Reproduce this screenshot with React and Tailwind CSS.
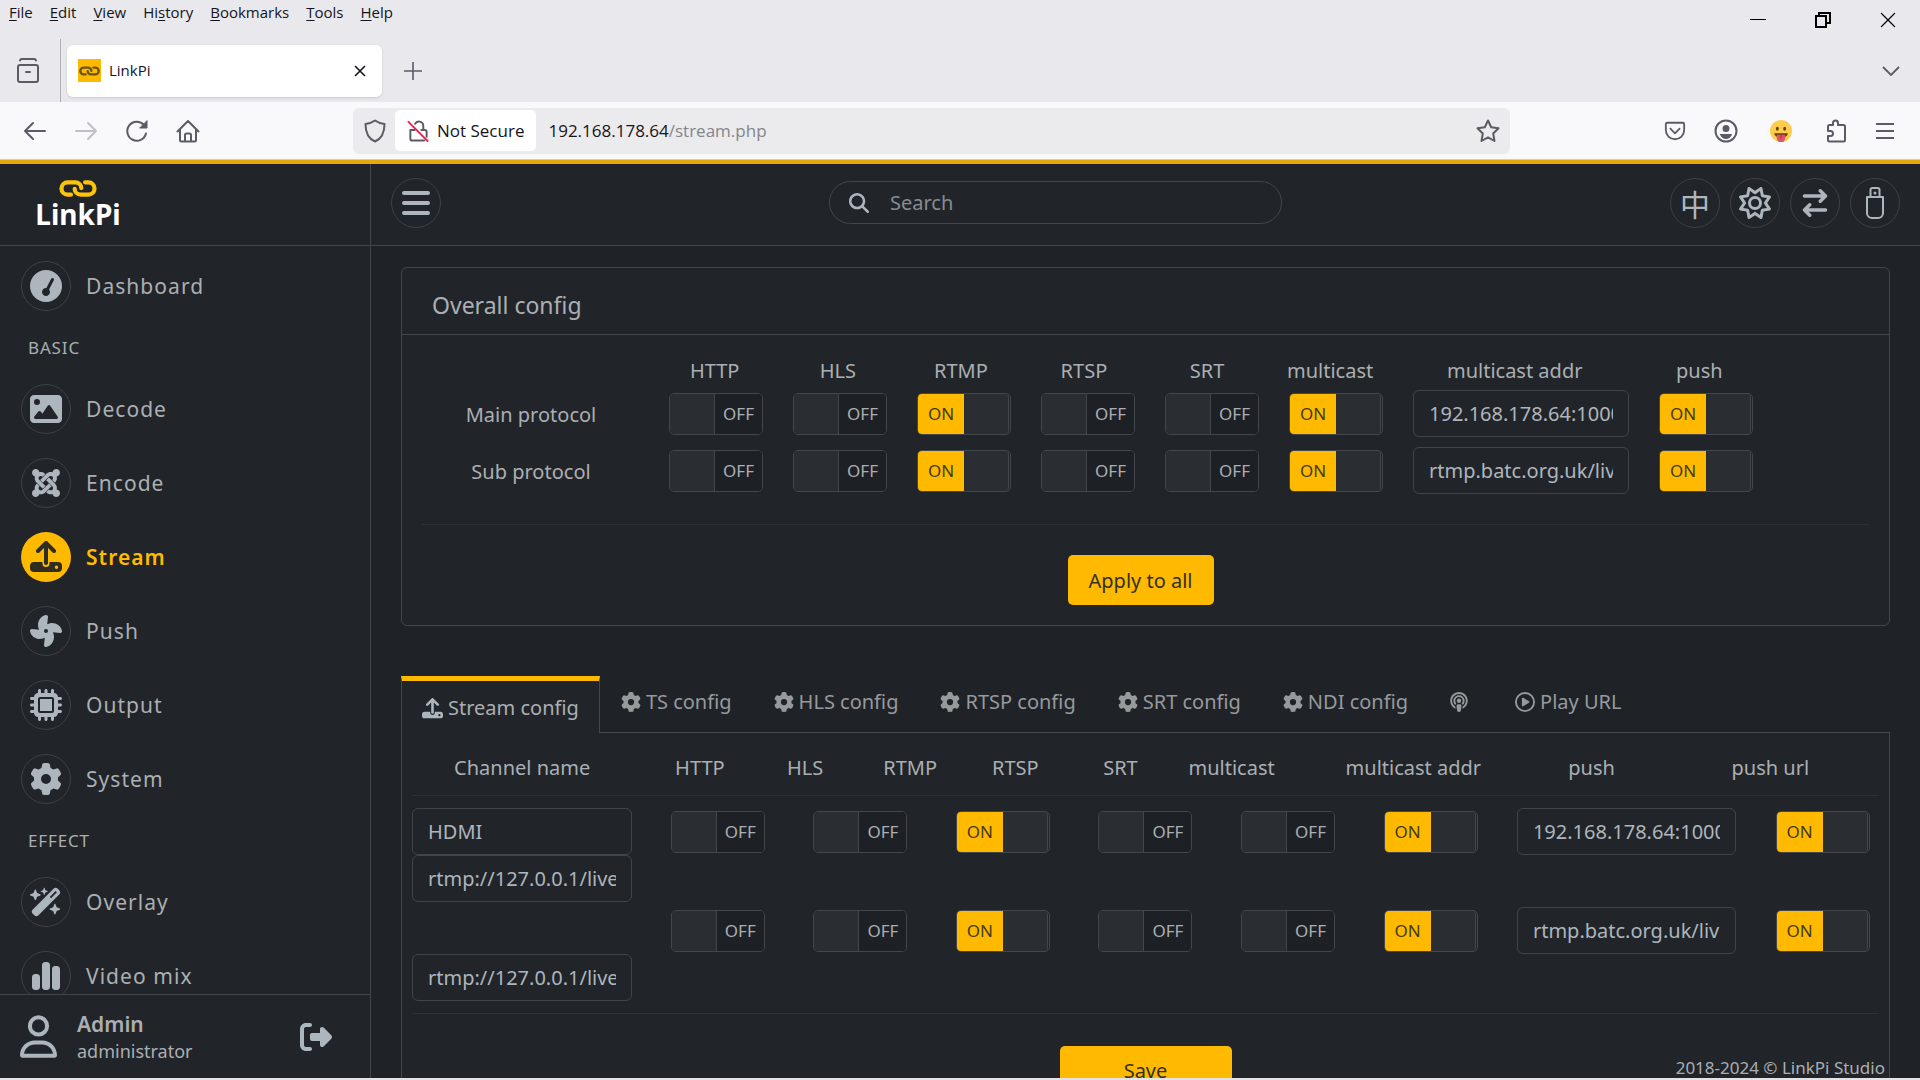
import React, { useState } from 'react';
import {
  FaArrowRightArrowLeft,
  FaBars,
  FaChartSimple,
  FaFan,
  FaGaugeSimpleHigh,
  FaGear,
  FaImage,
  FaJoomla,
  FaMagnifyingGlass,
  FaMicrochip,
  FaPodcast,
  FaRegCirclePlay,
  FaRegSun,
  FaRegUser,
  FaRightFromBracket,
  FaWandMagicSparkles,
} from 'react-icons/fa6';

// Drive with an arrow leaving it, used for streaming
const StreamIcon = ({ className }) => (
  <svg className={className} viewBox="0 0 32 32" fill="none" aria-hidden="true">
    <path
      fill="currentColor"
      fillRule="evenodd"
      d="M4 21h8.500v1.500a3.500 3.500 0 0 0 7 0V21H28a4 4 0 0 1 4 4v2a4 4 0 0 1-4 4H4a4 4 0 0 1-4-4v-2a4 4 0 0 1 4-4zm22.500 3.500a1.700 1.700 0 1 0 0 3.400 1.700 1.700 0 0 0 0-3.400z"
    />
    <path d="M16 22V3M8 10l8-8 8 8" stroke="currentColor" strokeWidth="4" strokeLinecap="round" strokeLinejoin="round" />
  </svg>
);

const UsbIcon = () => (
  <svg className="h-8 w-[18px]" viewBox="0 0 18 32" fill="none" stroke="currentColor" strokeWidth="2" aria-hidden="true">
    <path d="M4.500 10V3a2 2 0 0 1 2-2h5a2 2 0 0 1 2 2v7" />
    <path d="M1 10h16v16a5 5 0 0 1-5 5H6a5 5 0 0 1-5-5z" strokeLinejoin="round" />
    <circle cx="9" cy="6" r="1.500" fill="currentColor" stroke="none" />
  </svg>
);

const ChainIcon = ({ className, color }) => (
  <svg className={className} viewBox="0 0 40 18" fill="none" stroke={color} strokeWidth="4.500" strokeLinecap="round" aria-hidden="true">
    <path d="M12.500 15.500H9A6.500 6.500 0 0 1 9 2.500h8c4 0 6.500 3 6.500 6" />
    <path d="M27.500 2.500H31a6.500 6.500 0 0 1 0 13h-8c-4 0-6.500-3-6.500-6" />
  </svg>
);

const ToolIcon = ({ children, className = 'size-6' }) => (
  <svg
    className={className}
    viewBox="0 0 24 24"
    fill="none"
    stroke="currentColor"
    strokeWidth="2"
    strokeLinecap="round"
    strokeLinejoin="round"
    aria-hidden="true"
  >
    {children}
  </svg>
);

const menus = [
  ['', 'F', 'ile'],
  ['', 'E', 'dit'],
  ['', 'V', 'iew'],
  ['Hi', 's', 'tory'],
  ['', 'B', 'ookmarks'],
  ['', 'T', 'ools'],
  ['', 'H', 'elp'],
];

const navGroups = [
  { items: [{ label: 'Dashboard', icon: FaGaugeSimpleHigh }] },
  {
    title: 'BASIC',
    items: [
      { label: 'Decode', icon: FaImage },
      { label: 'Encode', icon: FaJoomla },
      { label: 'Stream', icon: StreamIcon, active: true },
      { label: 'Push', icon: FaFan },
      { label: 'Output', icon: FaMicrochip },
      { label: 'System', icon: FaGear },
    ],
  },
  {
    title: 'EFFECT',
    items: [
      { label: 'Overlay', icon: FaWandMagicSparkles },
      { label: 'Video mix', icon: FaChartSimple },
    ],
  },
];

const tabs = [
  { label: 'TS config', icon: FaGear },
  { label: 'HLS config', icon: FaGear },
  { label: 'RTSP config', icon: FaGear },
  { label: 'SRT config', icon: FaGear },
  { label: 'NDI config', icon: FaGear },
  { label: '', icon: FaPodcast },
  { label: 'Play URL', icon: FaRegCirclePlay },
];

const protocols = ['HTTP', 'HLS', 'RTMP', 'RTSP', 'SRT', 'multicast'];
const defaults = [false, false, true, false, false, true];

const BrowserChrome = () => (
  <header className="shrink-0 bg-[#e9e9ed] font-['Open_Sans',sans-serif] text-[15px] text-[#15141a]">
    <div className="flex h-[39px] items-start justify-between">
      <nav className="flex gap-[17px] pl-[9px] pt-px leading-[22px]">
        {menus.map(([before, key, after]) => (
          <button key={key + after} type="button">
            {before}
            <span className="underline underline-offset-2">{key}</span>
            {after}
          </button>
        ))}
      </nav>
      <div className="flex h-[39px] items-center gap-[49px] pr-6 text-black">
        <button type="button" aria-label="Minimize">
          <svg className="size-4" viewBox="0 0 16 16" stroke="currentColor">
            <path d="M0 7.500h16" />
          </svg>
        </button>
        <button type="button" aria-label="Restore">
          <svg className="size-4" viewBox="0 0 16 16" fill="none" stroke="currentColor" strokeWidth="2">
            <path d="M1 4h10v11H1zM4 4V1h11v10h-4" />
          </svg>
        </button>
        <button type="button" aria-label="Close window">
          <svg className="size-4" viewBox="0 0 16 16" stroke="currentColor" strokeWidth="1.200">
            <path d="M1 1l14 14M15 1L1 15" />
          </svg>
        </button>
      </div>
    </div>

    <div className="flex h-[63px] items-center text-[#5b5b66]">
      <button type="button" aria-label="Recent browsing" className="flex h-full w-[61px] items-center border-r border-[#b0b0b8] pl-4">
        <svg
          className="h-7 w-6"
          viewBox="0 0 24 28"
          fill="none"
          stroke="currentColor"
          strokeWidth="2"
          strokeLinecap="round"
          strokeLinejoin="round"
          aria-hidden="true"
        >
          <path d="M4 3.500A2 2 0 0 1 6 2h12a2 2 0 0 1 2 1.500M4 8h16a2 2 0 0 1 2 2v13a2 2 0 0 1-2 2H4a2 2 0 0 1-2-2V10a2 2 0 0 1 2-2zM10 15h4" />
        </svg>
      </button>
      <div className="ml-[6px] flex h-[52px] w-[315px] items-center rounded-md bg-white pl-[11px] pr-4 text-[#15141a] shadow">
        <span className="flex size-[23px] items-center justify-center bg-[#ffba00]">
          <ChainIcon className="h-[10px] w-[21px]" color="#6b5310" />
        </span>
        <span className="ml-2 grow">LinkPi</span>
        <button type="button" aria-label="Close tab">
          <svg className="size-3" viewBox="0 0 12 12" stroke="currentColor" strokeWidth="1.600">
            <path d="M1 1l10 10M11 1L1 11" />
          </svg>
        </button>
      </div>
      <button type="button" aria-label="New tab" className="ml-[22px]">
        <svg className="size-[18px]" viewBox="0 0 18 18" stroke="currentColor" strokeWidth="1.600">
          <path d="M9 0v18M0 9h18" />
        </svg>
      </button>
      <button type="button" aria-label="List all tabs" className="ml-auto mr-5">
        <svg className="h-[10px] w-[18px]" viewBox="0 0 18 10" fill="none" stroke="currentColor" strokeWidth="1.800">
          <path d="M1 1l8 8 8-8" />
        </svg>
      </button>
    </div>

    <div className="flex h-[57px] items-center bg-[#f9f9fb] text-[17px] text-[#5b5b66]">
      <div className="flex w-[353px] items-center gap-[27px] pl-[23px]">
        <button type="button" aria-label="Back">
          <ToolIcon>
            <path d="M22 12H2M10 4l-8 8 8 8" />
          </ToolIcon>
        </button>
        <button type="button" aria-label="Forward" disabled className="text-[#bfbfc5]">
          <ToolIcon>
            <path d="M2 12h20M14 4l8 8-8 8" />
          </ToolIcon>
        </button>
        <button type="button" aria-label="Reload">
          <ToolIcon>
            <path d="M21 14.500A9.500 9.500 0 1 1 19 6l2 2" />
            <path d="M22 2v7h-7z" fill="currentColor" strokeWidth="1" />
          </ToolIcon>
        </button>
        <button type="button" aria-label="Home">
          <ToolIcon>
            <path d="M1.500 12.500L12 2l10.500 10.500M4 10.500V21a1.500 1.500 0 0 0 1.500 1.500h13A1.500 1.500 0 0 0 20 21V10.500M9 22v-6a1.500 1.500 0 0 1 1.500-1.500h3A1.500 1.500 0 0 1 15 16v6" />
          </ToolIcon>
        </button>
      </div>
      <div className="flex h-[46px] min-w-0 grow items-center rounded-md bg-[#ebebed] pl-[10px] pr-[10px]">
        <ToolIcon className="mr-2 size-6">
          <path d="M12 1.500c2.800 2 5.600 3 9.500 3.500C21.500 13.500 19 19.500 12 22.500 5 19.500 2.500 13.500 2.500 5c3.900-.5 6.700-1.500 9.500-3.500z" />
        </ToolIcon>
        <button type="button" className="flex h-[41px] shrink-0 items-center gap-[7px] rounded-[5px] bg-white pl-3 pr-3 text-[#15141a]">
          <svg className="size-[23px]" viewBox="0 0 24 24" fill="none" stroke="#5b5b66" strokeWidth="2" strokeLinecap="round" aria-hidden="true">
            <path d="M8.500 5a4.500 4.500 0 0 1 8.500 2v4.500M3.500 11.500H8M3.500 11.500v9a2 2 0 0 0 2 2H18M15 11.500h3.500a2 2 0 0 1 2 2v5" />
            <path d="M1.500 3l20 20" stroke="#e22850" />
          </svg>
          Not Secure
        </button>
        <p className="ml-3 grow text-[#15141a]">
          192.168.178.64<span className="text-[#84848b]">/stream.php</span>
        </p>
        <button type="button" aria-label="Bookmark this page">
          <ToolIcon>
            <path d="M12 1.500l3.200 6.800 7.300 1-5.300 5.200 1.300 7.500-6.500-3.600L5.500 22l1.300-7.500L1.500 9.300l7.300-1z" />
          </ToolIcon>
        </button>
      </div>
      <div className="flex w-[410px] items-center justify-end gap-7 pr-[26px]">
        <button type="button" aria-label="Save to Pocket">
          <ToolIcon className="size-[22px]">
            <path d="M3.500 3h17A1.500 1.500 0 0 1 22 4.500V11a10 10 0 0 1-20 0V4.500A1.500 1.500 0 0 1 3.500 3zM7 9.500l5 5 5-5" />
          </ToolIcon>
        </button>
        <button type="button" aria-label="Account">
          <ToolIcon>
            <circle cx="12" cy="12" r="10.500" />
            <circle cx="12" cy="9.500" r="2.500" fill="currentColor" />
            <path d="M6.500 15.500h11c-1 3-3 4-5.500 4s-4.500-1-5.500-4z" fill="currentColor" strokeWidth="1" />
          </ToolIcon>
        </button>
        <button type="button" aria-label="Extension" className="ml-1">
          <svg className="size-[22px]" viewBox="0 0 24 24" aria-hidden="true">
            <circle cx="12" cy="12" r="12" fill="#ffcc4d" />
            <ellipse cx="8" cy="9.500" rx="1.600" ry="2.200" fill="#664500" />
            <ellipse cx="16" cy="9.500" rx="1.600" ry="2.200" fill="#664500" />
            <path d="M4.500 14.500h15c-.5 3-3 5-7.500 5s-7-2-7.500-5z" fill="#664500" />
            <path d="M7.500 16h9v4a4.500 4.500 0 0 1-9 0z" fill="#e0526e" />
            <path d="M12 16v4" stroke="#be1931" />
          </svg>
        </button>
        <button type="button" aria-label="Extensions" className="ml-1">
          <ToolIcon>
            <path d="M9 6V4a2.500 2.500 0 0 1 5 0v2h5.500A1.500 1.500 0 0 1 21 7.500V21a1.500 1.500 0 0 1-1.500 1.500h-14A1.500 1.500 0 0 1 4 21v-4h2.500a2.500 2.500 0 0 0 0-5H4V7.500A1.500 1.500 0 0 1 5.500 6z" />
          </ToolIcon>
        </button>
        <button type="button" aria-label="Application menu">
          <svg className="h-4 w-[18px]" viewBox="0 0 18 16" stroke="currentColor" strokeWidth="1.800">
            <path d="M0 1h18M0 8h18M0 15h18" />
          </svg>
        </button>
      </div>
    </div>
    <div className="h-[5px] border-t border-[#ccccd2] bg-[#e6a80a]" />
  </header>
);

const Sidebar = () => (
  <aside className="flex w-[371px] shrink-0 flex-col border-r border-[#43474b] bg-[#212529]">
    <div className="h-[82px] shrink-0 border-b border-[#43474b] pl-[36px] pt-4">
      <a href="#home" className="flex w-[84px] flex-col items-center">
        <ChainIcon className="h-[17px] w-10" color="#fdc40c" />
        <span className="text-[28px] font-bold leading-[34px] text-white">LinkPi</span>
      </a>
    </div>
    <nav className="min-h-0 grow overflow-hidden pt-[15px]">
      {navGroups.map((group, index) => (
        <div key={index}>
          {group.title && (
            <h2 className="flex h-[73px] items-center pl-7 text-[17px] tracking-wider">{group.title}</h2>
          )}
          <ul className="flex flex-col gap-6">
            {group.items.map(({ label, icon: Icon, active }) => (
              <li key={label}>
                <a
                  href={`#${label}`}
                  className={`flex items-center gap-[15px] pl-[21px] text-[21px] tracking-wider ${active ? 'font-semibold text-[#ffba00]' : ''}`}
                >
                  <span
                    className={`flex size-[50px] items-center justify-center rounded-full ${
                      active ? 'bg-[#ffba00] text-[#2f2c22]' : 'border border-[#3d4145] text-[#adb5bd]'
                    }`}
                  >
                    <Icon className="size-8" />
                  </span>
                  <span className="pt-[2px]">{label}</span>
                </a>
              </li>
            ))}
          </ul>
        </div>
      ))}
    </nav>
    <div className="flex h-[84px] shrink-0 items-center border-t border-[#43474b] pl-5 pr-[38px]">
      <FaRegUser className="h-[43px] w-[37px] text-[#adb5bd]" />
      <div className="ml-5 grow">
        <p className="text-[21px] font-semibold leading-[28px]">Admin</p>
        <p className="text-[18px] leading-[26px]">administrator</p>
      </div>
      <button type="button" aria-label="Log out" className="text-[#adb5bd]">
        <FaRightFromBracket className="size-8" />
      </button>
    </div>
  </aside>
);

const RoundButton = ({ label, children }) => (
  <button
    type="button"
    aria-label={label}
    className="flex size-[50px] items-center justify-center rounded-full border border-[#3d4145] text-[#adb5bd]"
  >
    {children}
  </button>
);

const TopBar = () => (
  <div className="flex h-[82px] shrink-0 items-center justify-between border-b border-[#43474b] bg-[#212529] pb-1 pl-5 pr-5">
    <RoundButton label="Toggle menu">
      <FaBars className="size-8" />
    </RoundButton>
    <label className="flex h-[43px] w-[453px] items-center rounded-full border border-[#43474b] pl-[19px]">
      <FaMagnifyingGlass className="size-5 text-[#adb5bd]" />
      <input
        type="search"
        aria-label="Search"
        placeholder="Search"
        className="ml-[21px] min-w-0 grow bg-transparent text-[20px] outline-none placeholder:text-[#878c91]"
      />
    </label>
    <div className="flex gap-[10px]">
      <RoundButton label="Language">
        <span className="font-['Noto_Sans_CJK_SC',sans-serif] text-[30px] leading-[30px]">中</span>
      </RoundButton>
      <RoundButton label="Theme">
        <FaRegSun className="size-8" />
      </RoundButton>
      <RoundButton label="Transfer">
        <FaArrowRightArrowLeft className="size-7" />
      </RoundButton>
      <RoundButton label="Storage">
        <UsbIcon />
      </RoundButton>
    </div>
  </div>
);

const Toggle = ({ label, initial }) => {
  const [on, setOn] = useState(initial);
  return (
    <button
      type="button"
      role="switch"
      aria-checked={on}
      aria-label={label}
      onClick={() => setOn(!on)}
      className="flex h-[42px] w-[94px] shrink-0 overflow-hidden rounded-[5px] border border-[#43474b] text-[17px] leading-[40px]"
    >
      {on ? (
        <>
          <span className="w-[46px] bg-[#ffba00] text-center text-[#443a1b]">ON</span>
          <span className="mr-px grow rounded-r-[4px] border-r border-[#43474b] bg-[#2a2e32]" />
        </>
      ) : (
        <>
          <span className="w-[45px] border-r border-[#43474b] bg-[#2a2e32]" />
          <span className="grow bg-[#1d2025] text-center">OFF</span>
        </>
      )}
    </button>
  );
};

const TextField = ({ label, value }) => (
  <input
    type="text"
    aria-label={label}
    defaultValue={value}
    className="block h-[47px] w-full min-w-0 rounded-md border border-[#40454a] bg-transparent px-[15px] text-[20px] text-[#adb5bd] outline-none"
  />
);

const Divider = () => <hr className="border-[#2e3236]" />;

const OverallRow = ({ name, address }) => (
  <div className="flex items-center pl-px">
    <p className="w-2/12 shrink-0 pt-[2px] text-center">{name}</p>
    {protocols.map((protocol, i) => (
      <div key={protocol} className="w-1/12 min-w-fit px-[15px]">
        <Toggle label={`${name} ${protocol}`} initial={defaults[i]} />
      </div>
    ))}
    <div className="w-2/12 shrink-0 px-[15px]">
      <TextField label={`${name} multicast addr`} value={address} />
    </div>
    <div className="w-1/12 min-w-fit px-[15px]">
      <Toggle label={`${name} push`} initial />
    </div>
  </div>
);

const OverallConfig = () => (
  <section className="rounded-md border border-[#43474b] bg-[#212529]">
    <h1 className="flex h-[67px] items-center border-b border-[#43474b] pl-[30px] pt-2 text-[23px]">Overall config</h1>
    <div className="px-5 pb-5 pt-[21px]">
      <div className="mx-[-15px]">
        <div className="mb-1 flex text-center leading-[30px]">
          <span className="w-2/12" />
          {protocols.map((protocol) => (
            <span key={protocol} className="w-1/12">
              {protocol}
            </span>
          ))}
          <span className="w-2/12">multicast addr</span>
          <span className="w-1/12">push</span>
        </div>
        <div className="flex flex-col gap-[10px]">
          <OverallRow name="Main protocol" address="192.168.178.64:10000" />
          <OverallRow name="Sub protocol" address="rtmp.batc.org.uk/live" />
        </div>
      </div>
      <div className="pb-[30px] pt-[30px]">
        <Divider />
      </div>
      <div className="flex justify-center pr-[10px]">
        <button type="button" className="h-[50px] rounded-[5px] bg-[#ffba00] px-[21px] pt-px text-[#33301f]">
          Apply to all
        </button>
      </div>
    </div>
  </section>
);

const ChannelRow = ({ channel, name, address }) => (
  <div>
    <div className="grid grid-cols-[1.75fr_repeat(6,1fr)_1.75fr_1fr] items-center">
      <div className="h-[47px] px-[15px]">{name && <TextField label="Channel name" value={name} />}</div>
      {protocols.map((protocol, i) => (
        <div key={protocol} className="flex justify-center">
          <Toggle label={`${channel} ${protocol}`} initial={defaults[i]} />
        </div>
      ))}
      <div className="px-[15px]">
        <TextField label={`${channel} multicast addr`} value={address} />
      </div>
      <div className="flex justify-center">
        <Toggle label={`${channel} push`} initial />
      </div>
    </div>
    <div className="w-1/6 px-[15px]">
      <TextField label={`${channel} push url`} value="rtmp://127.0.0.1/live/" />
    </div>
  </div>
);

const StreamConfig = () => (
  <section className="mt-[50px]">
    <div role="tablist" className="flex items-start">
      <button
        type="button"
        role="tab"
        aria-selected="true"
        className="z-10 -mb-px flex h-[57px] items-center gap-[5px] border-x border-t-[5px] border-x-[#43474b] border-t-[#ffba00] bg-[#212529] px-5 pt-[2px]"
      >
        <StreamIcon className="size-[21px] text-[#adb5bd]" />
        Stream config
      </button>
      {tabs.map(({ label, icon: Icon }) => (
        <button
          key={label}
          type="button"
          role="tab"
          aria-selected="false"
          aria-label={label || 'Multicast'}
          className="flex h-[52px] items-center gap-[5px] px-[21px] text-[#979a9c]"
        >
          <Icon className={label ? 'size-5' : 'h-5 w-[18px]'} />
          <span>{label}</span>
        </button>
      ))}
    </div>
    <div role="tabpanel" className="border border-[#43474b] bg-[#212529] px-[10px] pb-10 pt-5">
      <div className="mx-[-15px] mb-3 grid grid-cols-[250fr_repeat(5,105fr)_117fr_246fr_110fr_247fr] text-center leading-[30px]">
        <span>Channel name</span>
        {protocols.map((protocol) => (
          <span key={protocol}>{protocol}</span>
        ))}
        <span>multicast addr</span>
        <span>push</span>
        <span>push url</span>
      </div>
      <Divider />
      <div className="mx-[-15px] flex flex-col gap-[5px] py-3">
        <ChannelRow channel="Main" name="HDMI" address="192.168.178.64:10000" />
        <ChannelRow channel="Sub" address="rtmp.batc.org.uk/live" />
      </div>
      <Divider />
      <div className="flex justify-center pt-8">
        <button type="button" className="h-[50px] w-[172px] rounded-[5px] bg-[#ffba00] text-[#33301f]">
          Save
        </button>
      </div>
    </div>
  </section>
);

const App = () => (
  <div className="flex h-screen flex-col overflow-hidden bg-[#e4e4e6]">
    <BrowserChrome />
    <div className="mb-[2px] flex min-h-0 grow bg-[#1f2327] font-['Noto_Sans',sans-serif] text-[20px] text-[#abafb3]">
      <Sidebar />
      <div className="relative flex min-w-0 grow flex-col">
        <TopBar />
        <main className="min-h-0 grow overflow-hidden pl-[30px] pr-[30px] pt-[21px]">
          <OverallConfig />
          <StreamConfig />
        </main>
        <footer className="absolute bottom-0 right-[35px] text-[17px] leading-[20px]">2018-2024 © LinkPi Studio</footer>
      </div>
    </div>
  </div>
);

export default App;
